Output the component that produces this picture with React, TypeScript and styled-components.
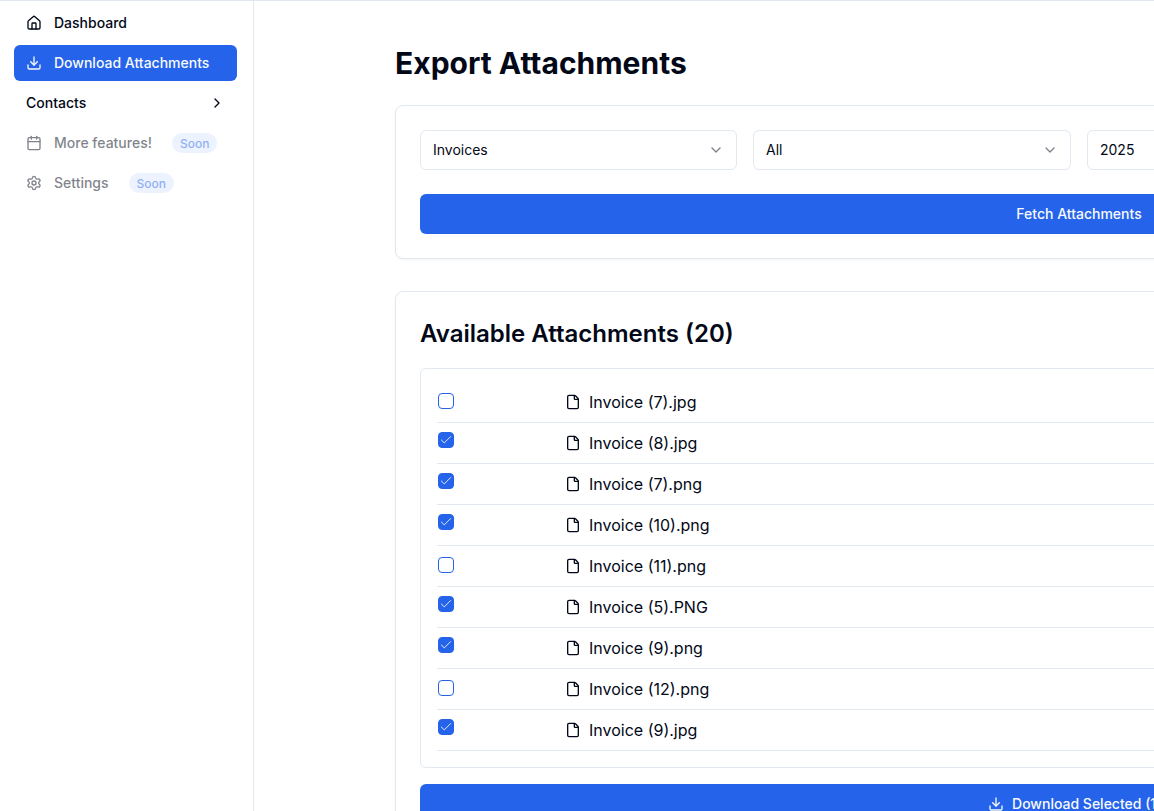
import styled, { createGlobalStyle } from 'styled-components';
import { Calendar, Check, ChevronDown, ChevronRight, Download, File, House, Settings } from 'lucide-react';
import { ReactNode } from 'react';

const GlobalStyle = createGlobalStyle`
  html, body {
    margin: 0;
    height: 100%;
    overflow: hidden;
    background: #fff;
  }
  body {
    font-family: Inter, "Liberation Sans", sans-serif;
    color: #020817;
  }
  * { box-sizing: border-box; }
`;

const Shell = styled.div`
  display: flex;
  width: 1154px;
  height: 811px;
  overflow: hidden;
  border-top: 1px solid #e2e8f0;
`;

const Sidebar = styled.aside`
  flex: none;
  width: 254px;
  padding: 4px 16px 0 14px;
  border-right: 1px solid #e2e8f0;
  display: flex;
  flex-direction: column;
  gap: 4px;
`;

const NavItem = styled.div<{ $active?: boolean; $muted?: boolean }>`
  height: 36px;
  padding: 0 12px;
  border-radius: 6px;
  display: flex;
  align-items: center;
  gap: 12px;
  font-size: 14px;
  font-weight: 500;
  white-space: nowrap;
  background: ${({ $active }) => ($active ? '#2563eb' : 'transparent')};
  color: ${({ $active }) => ($active ? '#f8fafc' : '#020817')};
  opacity: ${({ $muted }) => ($muted ? 0.5 : 1)};

  svg { flex: none; }
`;

const Label = styled.span`
  margin-top: -2px;
`;

const NavChevron = styled(ChevronRight)`
  margin-left: auto;
`;

const SoonBadge = styled.span`
  margin-left: 8px;
  padding: 0 8px;
  height: 20px;
  display: inline-flex;
  align-items: center;
  border-radius: 999px;
  background: #dbe7fe;
  color: #2563eb;
  font-size: 12px;
  font-weight: 500;
`;

const Main = styled.main`
  flex: none;
  width: 1368px;
  margin-left: 141px;
  padding-top: 40px;
`;

const Title = styled.h1`
  margin: 0 0 23px;
  height: 41px;
  line-height: 44px;
  font-size: 30px;
  font-weight: 700;
`;

const Card = styled.section`
  border: 1px solid #e2e8f0;
  border-radius: 8px;
  padding: 24px;
  background: #fff;
  box-shadow: 0 1px 2px rgba(0, 0, 0, 0.05);
  margin-bottom: 32px;
`;

const FilterGrid = styled.div`
  display: grid;
  grid-template-columns: 317px 318px 317px 318px;
  gap: 16px;
  margin-bottom: 24px;
`;

const SelectBox = styled.div`
  height: 40px;
  padding: 0 12px;
  border: 1px solid #e2e8f0;
  border-radius: 6px;
  display: flex;
  align-items: center;
  justify-content: space-between;
  font-size: 14px;

  svg {
    color: #020817;
    opacity: 0.5;
  }
`;

const PrimaryButton = styled.button`
  width: 100%;
  height: 40px;
  border: 0;
  border-radius: 6px;
  background: #2563eb;
  color: #f8fafc;
  font-family: inherit;
  font-size: 14px;
  font-weight: 500;
  display: flex;
  align-items: center;
  justify-content: center;
  gap: 8px;
`;

const SectionTitle = styled.h2`
  margin: 0 0 20px;
  height: 32px;
  line-height: 36px;
  font-size: 24px;
  font-weight: 600;
`;

const FileList = styled.div`
  border: 1px solid #e2e8f0;
  border-radius: 6px;
  padding: 13px 16px 16px;
  margin-bottom: 16px;
`;

const FileRow = styled.div`
  height: 41px;
  display: grid;
  grid-template-columns: 128px 1fr;
  border-bottom: 1px solid #e2e8f0;
`;

const CheckBox = styled.span<{ $checked?: boolean }>`
  width: 16px;
  height: 16px;
  margin: ${({ $checked }) => ($checked ? '9px' : '11px')} 0 0 1px;
  border: 1px solid #2563eb;
  border-radius: 4px;
  display: flex;
  align-items: center;
  justify-content: center;
  background: ${({ $checked }) => ($checked ? '#2563eb' : '#fff')};
  color: #f8fafc;
`;

const FileName = styled.div`
  display: flex;
  align-items: center;
  gap: 8px;
  font-size: 16px;
`;

const files: { name: string; checked: boolean }[] = [
  { name: 'Invoice (7).jpg', checked: false },
  { name: 'Invoice (8).jpg', checked: true },
  { name: 'Invoice (7).png', checked: true },
  { name: 'Invoice (10).png', checked: true },
  { name: 'Invoice (11).png', checked: false },
  { name: 'Invoice (5).PNG', checked: true },
  { name: 'Invoice (9).png', checked: true },
  { name: 'Invoice (12).png', checked: false },
  { name: 'Invoice (9).jpg', checked: true },
];

function Select({ children }: { children: ReactNode }) {
  return (
    <SelectBox>
      <Label>{children}</Label>
      <ChevronDown size={16} />
    </SelectBox>
  );
}

export default function App() {
  return (
    <>
      <GlobalStyle />
      <Shell>
        <Sidebar>
          <NavItem>
            <House size={16} />
            <Label>Dashboard</Label>
          </NavItem>
          <NavItem $active>
            <Download size={16} />
            <Label>Download Attachments</Label>
          </NavItem>
          <NavItem>
            <Label>Contacts</Label>
            <NavChevron size={16} />
          </NavItem>
          <NavItem $muted>
            <Calendar size={16} />
            <Label>More features!</Label>
            <SoonBadge>Soon</SoonBadge>
          </NavItem>
          <NavItem $muted>
            <Settings size={16} />
            <Label>Settings</Label>
            <SoonBadge>Soon</SoonBadge>
          </NavItem>
        </Sidebar>
        <Main>
          <Title>Export Attachments</Title>
          <Card>
            <FilterGrid>
              <Select>Invoices</Select>
              <Select>All</Select>
              <Select>2025</Select>
            </FilterGrid>
            <PrimaryButton>
              <Label>Fetch Attachments</Label>
            </PrimaryButton>
          </Card>
          <Card>
            <SectionTitle>Available Attachments (20)</SectionTitle>
            <FileList>
              {files.map((file) => (
                <FileRow key={file.name}>
                  <CheckBox $checked={file.checked}>
                    {file.checked && <Check size={14} strokeWidth={1.5} />}
                  </CheckBox>
                  <FileName>
                    <File size={16} />
                    {file.name}
                  </FileName>
                </FileRow>
              ))}
            </FileList>
            <PrimaryButton>
              <Download size={16} />
              <Label>Download Selected (15)</Label>
            </PrimaryButton>
          </Card>
        </Main>
      </Shell>
    </>
  );
}
